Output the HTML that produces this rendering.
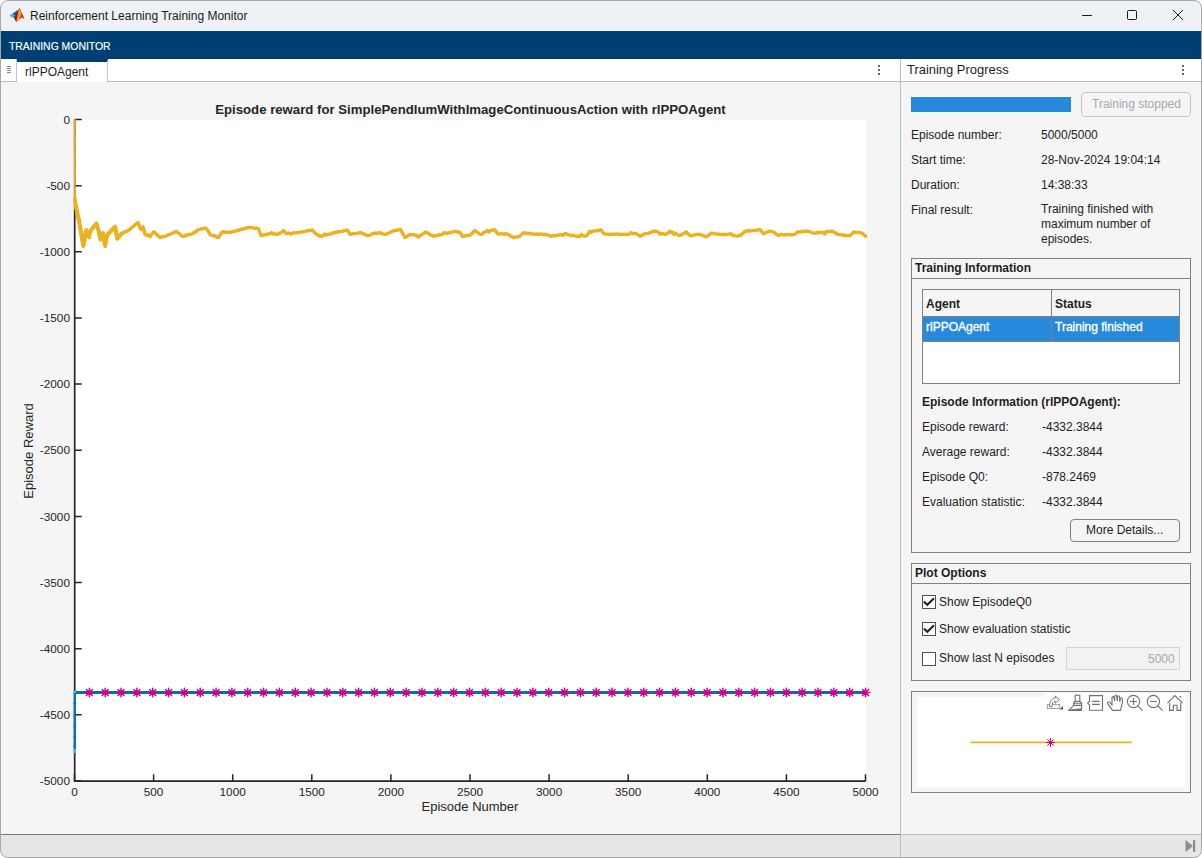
<!DOCTYPE html>
<html><head><meta charset="utf-8">
<style>
*{margin:0;padding:0;box-sizing:border-box;}
html,body{width:1202px;height:858px;overflow:hidden;background:#ffffff;font-family:"Liberation Sans",sans-serif;}
.abs{position:absolute;}
#win{position:absolute;left:0;top:0;width:1202px;height:858px;overflow:hidden;border-radius:8px;background:#f5f5f5;}
#frame{position:absolute;left:0;top:0;width:1202px;height:858px;border:1px solid #a8a8a8;border-radius:8px;box-shadow:0 0 0 6px #ffffff;pointer-events:none;}
.t{position:absolute;white-space:nowrap;font-size:12px;color:#1e1e1e;line-height:15px;transform:translateY(1px);}
.b{font-weight:bold;}
</style></head><body>
<div id="win">
  <!-- title bar -->
  <div class="abs" style="left:0;top:0;width:1200px;height:30px;background:#eef2f7;"></div>
  <svg class="abs" style="left:0;top:0" width="30" height="30" viewBox="0 0 30 30">
    <path d="M9.3 15.7 L14.5 12.6 L18.7 9.3 L16.5 14.5 L14.2 18.3 Z" fill="#4ba6ea"/>
    <path d="M12.5 13.8 L18.7 9.3 L16.8 13.8 L14.5 15.2 Z" fill="#1f5aa0"/>
    <path d="M14 17.6 L19.8 7.8 L24.6 19.2 L21.8 17.6 L16.4 22 Z" fill="#c43518"/>
    <path d="M14 17.6 L17.8 11.2 L17.4 17.2 L16.4 22 Z" fill="#8a1c10"/>
    <path d="M19.8 7.8 L21.6 13.2 L19.8 18.8 L16.4 22 L17.3 16.5 L18.6 10.8 Z" fill="#f29a30"/>
    <path d="M16.4 22 L17.6 19 L19.6 18.6 Z" fill="#f5c33a"/>
  </svg>
  <div class="t" style="left:30px;top:8px;font-size:12px;color:#1a1a1a;">Reinforcement Learning Training Monitor</div>
  <!-- window controls -->
  <div class="abs" style="left:1082px;top:15px;width:10px;height:1px;background:#1a1a1a;"></div>
  <div class="abs" style="left:1127px;top:10px;width:10px;height:10px;border:1px solid #1a1a1a;border-radius:1.5px;"></div>
  <svg class="abs" style="left:1172px;top:9px" width="12" height="12" viewBox="0 0 12 12"><path d="M1 1 L11 11 M11 1 L1 11" stroke="#1a1a1a" stroke-width="1"/></svg>
  <!-- toolstrip band -->
  <div class="abs" style="left:0;top:31px;width:1202px;height:28px;background:#003f73;"></div>
  <div class="t" style="left:9px;top:38px;font-size:11.5px;color:#ffffff;-webkit-text-stroke:0.15px #fff;transform:translateY(1px) scaleX(0.905);transform-origin:0 0;">TRAINING MONITOR</div>
  <!-- tab row -->
  <div class="abs" style="left:0;top:59px;width:900px;height:23px;background:#ffffff;border-bottom:1px solid #bdbdbd;"></div>
  <div class="abs" style="left:16px;top:59px;width:92px;height:23px;background:#ffffff;border-top:3px solid #003f73;border-left:1px solid #c8c8c8;border-right:1px solid #c8c8c8;"></div>
  <div class="t" style="left:25px;top:64px;">rlPPOAgent</div>
  <div class="abs" style="left:7px;top:66px;width:4px;height:1px;background:#8a8a8a;box-shadow:0 2px 0 #8a8a8a,0 4px 0 #8a8a8a,0 6px 0 #8a8a8a;"></div>
  <div class="abs" style="left:16px;top:59px;width:1px;height:23px;background:#c4c4c4;"></div>
  <div class="abs" style="left:878px;top:65px;width:2px;height:2px;background:#666;box-shadow:0 4px 0 #666,0 8px 0 #666;"></div>
  <!-- right header -->
  <div class="abs" style="left:901px;top:59px;width:300px;height:23px;background:#ffffff;border-bottom:1px solid #bdbdbd;"></div>
  <div class="t" style="left:907px;top:61px;font-size:12.95px;">Training Progress</div>
  <div class="abs" style="left:1182px;top:65px;width:2px;height:2px;background:#666;box-shadow:0 4px 0 #666,0 8px 0 #666;"></div>
  <!-- divider -->
  <div class="abs" style="left:900px;top:59px;width:1px;height:776px;background:#bdbdbd;"></div>
  <!-- chart -->
  <svg class="abs" style="left:0;top:0" width="1202" height="858" viewBox="0 0 1202 858">
  <rect x="75" y="120" width="791" height="661" fill="#ffffff"/>
<path d="M74.7 119.5 L74.7 781.2 L865.5 781.2" fill="none" stroke="#262626" stroke-width="1.7" stroke-linejoin="round"/>
<path d="M74.7 119.50 L81.7 119.50 M74.7 185.65 L81.7 185.65 M74.7 251.80 L81.7 251.80 M74.7 317.95 L81.7 317.95 M74.7 384.10 L81.7 384.10 M74.7 450.25 L81.7 450.25 M74.7 516.40 L81.7 516.40 M74.7 582.55 L81.7 582.55 M74.7 648.70 L81.7 648.70 M74.7 714.85 L81.7 714.85 M74.7 781.00 L81.7 781.00 M74.50 781.2 L74.50 774.2 M153.60 781.2 L153.60 774.2 M232.70 781.2 L232.70 774.2 M311.80 781.2 L311.80 774.2 M390.90 781.2 L390.90 774.2 M470.00 781.2 L470.00 774.2 M549.10 781.2 L549.10 774.2 M628.20 781.2 L628.20 774.2 M707.30 781.2 L707.30 774.2 M786.40 781.2 L786.40 774.2 M865.50 781.2 L865.50 774.2" stroke="#262626" stroke-width="1.5" fill="none"/>
<path d="M74.9 197.6 L76.8 212.7 L79.1 221.8 L80.6 230.9 L83.3 246.4 L85.2 237.0 L86.3 229.8 L87.8 233.8 L89.3 237.7 L90.1 230.9 L91.7 229.0 L93.3 227.1 L94.9 225.2 L96.5 223.3 L98.4 229.4 L100.3 240.0 L101.8 237.0 L103.3 234.0 L105.2 246.4 L107.1 234.7 L108.7 233.0 L110.3 231.4 L111.9 229.7 L113.5 228.1 L115.1 226.4 L117.0 238.9 L118.8 237.0 L120.5 235.1 L122.3 233.2 L123.8 232.4 L125.3 231.6 L126.8 231.3 L128.3 230.2 L129.8 229.4 L131.5 227.8 L133.1 226.7 L134.8 224.9 L136.4 223.6 L138.1 222.5 L140.0 228.0 L141.6 229.6 L143.1 226.9 L145.0 234.4 L146.7 235.3 L148.3 234.7 L150.0 236.8 L151.8 234.1 L153.7 231.9 L155.3 232.9 L156.8 234.7 L158.4 236.1 L160.0 237.5 L161.7 237.0 L163.3 236.4 L165.0 236.3 L166.7 235.7 L168.3 234.8 L170.0 234.4 L171.6 233.4 L173.1 233.0 L174.6 232.3 L176.2 231.2 L177.8 232.8 L179.3 233.3 L180.9 235.3 L182.5 236.2 L184.2 236.2 L185.8 235.0 L187.4 235.2 L189.1 234.2 L190.8 234.5 L192.4 233.7 L194.1 232.2 L195.7 232.1 L197.4 230.0 L199.1 229.7 L200.9 229.0 L202.6 228.6 L204.4 228.2 L206.1 228.1 L208.1 231.0 L210.0 234.4 L211.7 235.4 L213.4 235.5 L215.2 236.0 L216.9 237.2 L218.6 237.5 L220.4 234.4 L222.3 231.9 L223.8 231.8 L225.3 232.4 L226.8 232.1 L228.3 232.1 L229.8 232.5 L231.4 231.9 L232.9 231.6 L234.5 231.6 L236.0 230.9 L237.6 230.2 L239.2 230.3 L240.7 229.4 L242.3 229.4 L243.8 228.5 L245.4 228.6 L246.9 227.9 L248.5 227.5 L250.2 227.3 L251.8 227.7 L253.5 227.9 L255.2 228.4 L256.8 228.2 L258.5 228.7 L261.0 235.6 L262.5 234.9 L264.0 235.0 L265.5 234.7 L267.0 234.7 L268.5 233.6 L270.0 233.7 L271.5 232.5 L273.0 234.0 L274.5 233.8 L276.0 234.2 L277.5 234.4 L279.1 233.6 L280.6 232.9 L282.1 231.9 L283.7 230.6 L286.2 233.7 L287.7 233.4 L289.2 233.0 L290.7 234.1 L292.2 233.4 L293.7 232.8 L295.2 232.9 L296.7 232.6 L298.2 232.6 L299.7 232.2 L301.2 231.9 L302.8 231.9 L304.4 231.6 L306.0 231.1 L307.7 230.7 L309.3 230.6 L310.9 230.4 L312.5 230.0 L315.0 233.1 L316.7 234.4 L318.3 235.1 L320.0 236.2 L321.6 236.0 L323.1 235.9 L324.6 234.0 L326.2 235.0 L328.0 234.3 L329.7 234.0 L331.5 233.8 L333.2 232.6 L335.0 232.5 L336.6 232.3 L338.1 231.6 L339.7 231.7 L341.2 231.6 L342.8 231.1 L344.4 230.6 L345.9 230.6 L347.5 230.0 L350.0 234.4 L351.7 234.0 L353.3 233.6 L355.0 233.4 L356.7 233.4 L358.3 233.2 L360.0 232.5 L361.5 232.9 L363.0 233.6 L364.5 234.3 L366.0 235.0 L367.5 235.6 L369.2 235.4 L371.0 234.6 L372.7 233.7 L374.5 233.2 L376.2 233.1 L377.9 233.4 L379.5 232.4 L381.2 233.5 L382.9 233.8 L384.5 234.4 L386.2 234.4 L387.8 233.3 L389.4 232.8 L390.9 231.9 L392.5 231.2 L394.1 230.6 L395.7 230.3 L397.4 230.3 L399.0 229.4 L400.6 229.4 L402.1 232.4 L403.7 235.0 L405.0 237.5 L406.7 236.8 L408.3 235.8 L410.0 234.4 L411.7 234.9 L413.3 234.6 L415.0 235.3 L416.7 235.2 L418.3 237.2 L420.0 235.6 L421.9 234.5 L423.7 233.3 L425.6 231.9 L427.2 232.9 L428.8 233.4 L430.5 234.9 L432.1 235.4 L433.7 236.2 L435.5 235.7 L437.2 235.8 L439.0 234.8 L440.7 234.8 L442.5 234.4 L444.1 232.6 L445.6 233.2 L447.2 233.3 L448.8 232.8 L450.3 232.7 L451.9 232.1 L453.4 231.9 L455.0 231.2 L456.7 231.8 L458.3 232.0 L460.0 232.5 L462.5 236.2 L464.0 236.2 L465.5 235.5 L467.0 235.8 L468.5 235.4 L470.0 235.0 L471.7 233.8 L473.3 231.9 L475.0 230.6 L476.7 231.9 L478.3 233.1 L480.0 234.4 L481.5 234.4 L483.0 233.3 L484.5 232.0 L486.0 231.4 L487.5 230.6 L489.0 232.0 L490.5 230.7 L492.0 230.1 L493.5 229.8 L495.0 230.0 L497.5 233.7 L499.2 234.1 L500.8 233.9 L502.5 233.8 L504.2 234.5 L505.8 233.4 L507.5 234.4 L509.1 234.8 L510.6 236.1 L512.2 236.7 L513.7 237.5 L515.3 237.2 L516.9 236.9 L518.4 236.7 L520.0 236.2 L521.9 234.1 L523.7 232.7 L525.5 233.2 L527.2 233.3 L529.0 233.5 L530.7 233.5 L532.5 234.0 L534.1 234.1 L535.6 234.4 L537.2 234.0 L538.8 234.3 L540.3 234.0 L541.9 234.1 L543.4 234.7 L545.0 234.4 L546.5 234.5 L548.1 235.2 L549.7 235.8 L551.2 236.2 L552.7 235.7 L554.2 235.9 L555.7 235.5 L557.2 235.5 L558.7 235.1 L560.2 234.6 L561.7 234.7 L563.2 235.3 L564.7 233.7 L566.2 233.7 L568.1 234.6 L570.0 235.0 L571.5 235.6 L573.1 235.2 L574.7 235.9 L576.2 236.2 L578.0 236.1 L579.7 236.2 L581.5 234.4 L583.2 235.9 L585.0 236.2 L586.5 235.4 L588.0 234.0 L589.5 231.4 L591.0 232.4 L592.5 231.2 L594.2 231.1 L596.0 230.8 L597.7 230.9 L599.5 230.0 L601.2 230.0 L603.7 233.7 L605.3 234.0 L607.0 234.1 L608.6 234.2 L610.2 234.1 L611.9 234.3 L613.5 234.3 L615.1 234.1 L616.7 233.9 L618.4 234.4 L620.0 234.4 L621.6 234.1 L623.2 234.4 L624.9 234.3 L626.5 234.1 L628.1 234.4 L629.7 234.1 L631.3 232.6 L633.0 233.6 L634.6 233.4 L636.2 233.7 L638.1 234.9 L640.0 236.2 L641.7 235.2 L643.3 234.6 L645.0 233.7 L646.7 233.7 L648.3 233.3 L650.0 232.7 L651.7 232.1 L653.3 231.3 L655.0 231.2 L656.7 231.5 L658.3 232.0 L660.0 234.3 L661.7 233.4 L663.3 233.8 L665.0 234.4 L666.5 234.0 L668.0 233.2 L669.5 231.2 L671.0 232.5 L672.5 231.9 L674.0 234.5 L675.5 233.0 L677.0 234.5 L678.5 235.2 L680.0 235.6 L681.5 234.7 L683.1 233.5 L684.7 233.2 L686.2 231.9 L688.1 233.7 L690.0 235.6 L691.7 235.7 L693.3 234.9 L695.0 235.0 L696.7 234.4 L698.3 234.3 L700.0 234.4 L701.5 235.2 L703.1 235.5 L704.7 236.2 L706.2 236.9 L707.9 235.7 L709.5 234.7 L711.2 233.1 L713.0 233.2 L714.7 233.9 L716.5 234.0 L718.2 234.0 L720.0 234.4 L721.5 234.5 L723.0 234.5 L724.5 234.2 L726.0 234.8 L727.5 234.4 L729.2 234.1 L731.0 233.8 L732.7 235.5 L734.5 235.5 L736.2 236.2 L737.9 235.8 L739.5 235.3 L741.2 235.0 L743.1 232.9 L745.0 231.2 L746.5 231.3 L748.0 230.6 L749.5 231.1 L751.0 230.9 L752.5 230.6 L754.0 230.4 L755.5 230.5 L757.0 230.2 L758.5 229.7 L760.0 229.7 L761.9 231.9 L763.7 233.7 L765.3 233.0 L766.9 232.1 L768.4 231.5 L770.0 231.2 L771.9 231.6 L773.7 231.9 L775.6 233.6 L777.5 235.0 L779.1 235.2 L780.7 234.7 L782.3 234.5 L783.9 235.0 L785.5 234.6 L787.0 234.6 L788.6 234.5 L790.2 234.7 L791.8 234.8 L793.4 234.8 L795.0 234.4 L797.5 231.9 L799.2 232.0 L800.8 231.5 L802.5 231.9 L804.2 231.2 L805.8 231.2 L807.5 231.2 L809.0 231.6 L810.6 231.9 L812.2 232.9 L813.7 233.1 L815.3 233.2 L816.8 232.5 L818.4 232.9 L820.0 232.1 L821.5 232.3 L823.1 232.5 L824.7 234.0 L826.2 231.5 L827.8 231.9 L829.4 231.2 L830.9 231.1 L832.5 231.2 L834.2 232.4 L835.8 233.1 L837.5 234.4 L839.1 234.6 L840.6 234.6 L842.2 235.2 L843.8 235.0 L845.3 235.3 L846.9 235.6 L848.4 235.7 L850.0 235.6 L851.9 234.0 L853.7 231.9 L855.2 232.3 L856.7 232.6 L858.2 232.4 L859.7 232.8 L861.2 232.7 L863.4 234.4 L865.6 236.2" fill="none" stroke="#EDB120" stroke-width="3.4" stroke-linejoin="round" stroke-linecap="round"/>
<path d="M74.6 120 L74.9 200" fill="none" stroke="#EDB120" stroke-width="1.6"/>
<circle cx="74.6" cy="120" r="1.3" fill="#EDB120"/>
<circle cx="74.7" cy="140.5" r="1.3" fill="#EDB120"/>
<circle cx="74.8" cy="157" r="1.3" fill="#EDB120"/>
<circle cx="74.8" cy="174" r="1.3" fill="#EDB120"/>
<circle cx="74.9" cy="189" r="1.3" fill="#EDB120"/>
<circle cx="75" cy="197" r="1.3" fill="#EDB120"/>
<path d="M76 206 L77.5 214 L79 220 L80.5 229 L82 238 L83.3 245.5 L84.5 240 L85.5 233 L86.5 231 L88 236 L89.5 233 L92 229 L96.5 223.5 L98.5 230 L100 238 L101.5 236 L103 233 L104 241 L105.2 245.5 L106 239 L108 234 L111 231 L115 226.8 L116.5 234 L117.5 238.5 L120 235 L122.5 233" fill="none" stroke="#EDB120" stroke-width="4" stroke-linejoin="round" stroke-linecap="round"/>
<path d="M74.8 753.5 L74.8 692.5" fill="none" stroke="#0072BD" stroke-width="2.3"/>
<path d="M73.8 692.5 L865.5 692.5" fill="none" stroke="#0072BD" stroke-width="3"/>
<circle cx="74.8" cy="692" r="1.2" fill="#4DBEEE"/>
<circle cx="74.8" cy="750" r="1.2" fill="#4DBEEE"/>
<circle cx="74.8" cy="752" r="1.2" fill="#4DBEEE"/>
<circle cx="74.8" cy="703.5" r="1.4" fill="#0072BD"/>
<circle cx="74.8" cy="715.5" r="1.4" fill="#0072BD"/>
<circle cx="74.8" cy="726.5" r="1.4" fill="#0072BD"/>
<circle cx="74.8" cy="737" r="1.4" fill="#0072BD"/>
<circle cx="74.8" cy="746" r="1.4" fill="#0072BD"/>
<path d="M85.04 692.5 L93.64 692.5 M89.34 688.2 L89.34 696.8 M86.34 689.50 L92.34 695.50 M86.34 695.50 L92.34 689.50 M100.88 692.5 L109.48 692.5 M105.18 688.2 L105.18 696.8 M102.18 689.50 L108.18 695.50 M102.18 695.50 L108.18 689.50 M116.72 692.5 L125.32 692.5 M121.02 688.2 L121.02 696.8 M118.02 689.50 L124.02 695.50 M118.02 695.50 L124.02 689.50 M132.56 692.5 L141.16 692.5 M136.86 688.2 L136.86 696.8 M133.86 689.50 L139.86 695.50 M133.86 695.50 L139.86 689.50 M148.40 692.5 L157.00 692.5 M152.70 688.2 L152.70 696.8 M149.70 689.50 L155.70 695.50 M149.70 695.50 L155.70 689.50 M164.24 692.5 L172.84 692.5 M168.54 688.2 L168.54 696.8 M165.54 689.50 L171.54 695.50 M165.54 695.50 L171.54 689.50 M180.08 692.5 L188.68 692.5 M184.38 688.2 L184.38 696.8 M181.38 689.50 L187.38 695.50 M181.38 695.50 L187.38 689.50 M195.92 692.5 L204.52 692.5 M200.22 688.2 L200.22 696.8 M197.22 689.50 L203.22 695.50 M197.22 695.50 L203.22 689.50 M211.76 692.5 L220.36 692.5 M216.06 688.2 L216.06 696.8 M213.06 689.50 L219.06 695.50 M213.06 695.50 L219.06 689.50 M227.60 692.5 L236.20 692.5 M231.90 688.2 L231.90 696.8 M228.90 689.50 L234.90 695.50 M228.90 695.50 L234.90 689.50 M243.44 692.5 L252.04 692.5 M247.74 688.2 L247.74 696.8 M244.74 689.50 L250.74 695.50 M244.74 695.50 L250.74 689.50 M259.28 692.5 L267.88 692.5 M263.58 688.2 L263.58 696.8 M260.58 689.50 L266.58 695.50 M260.58 695.50 L266.58 689.50 M275.12 692.5 L283.72 692.5 M279.42 688.2 L279.42 696.8 M276.42 689.50 L282.42 695.50 M276.42 695.50 L282.42 689.50 M290.96 692.5 L299.56 692.5 M295.26 688.2 L295.26 696.8 M292.26 689.50 L298.26 695.50 M292.26 695.50 L298.26 689.50 M306.80 692.5 L315.40 692.5 M311.10 688.2 L311.10 696.8 M308.10 689.50 L314.10 695.50 M308.10 695.50 L314.10 689.50 M322.64 692.5 L331.24 692.5 M326.94 688.2 L326.94 696.8 M323.94 689.50 L329.94 695.50 M323.94 695.50 L329.94 689.50 M338.48 692.5 L347.08 692.5 M342.78 688.2 L342.78 696.8 M339.78 689.50 L345.78 695.50 M339.78 695.50 L345.78 689.50 M354.32 692.5 L362.92 692.5 M358.62 688.2 L358.62 696.8 M355.62 689.50 L361.62 695.50 M355.62 695.50 L361.62 689.50 M370.16 692.5 L378.76 692.5 M374.46 688.2 L374.46 696.8 M371.46 689.50 L377.46 695.50 M371.46 695.50 L377.46 689.50 M386.00 692.5 L394.60 692.5 M390.30 688.2 L390.30 696.8 M387.30 689.50 L393.30 695.50 M387.30 695.50 L393.30 689.50 M401.84 692.5 L410.44 692.5 M406.14 688.2 L406.14 696.8 M403.14 689.50 L409.14 695.50 M403.14 695.50 L409.14 689.50 M417.68 692.5 L426.28 692.5 M421.98 688.2 L421.98 696.8 M418.98 689.50 L424.98 695.50 M418.98 695.50 L424.98 689.50 M433.52 692.5 L442.12 692.5 M437.82 688.2 L437.82 696.8 M434.82 689.50 L440.82 695.50 M434.82 695.50 L440.82 689.50 M449.36 692.5 L457.96 692.5 M453.66 688.2 L453.66 696.8 M450.66 689.50 L456.66 695.50 M450.66 695.50 L456.66 689.50 M465.20 692.5 L473.80 692.5 M469.50 688.2 L469.50 696.8 M466.50 689.50 L472.50 695.50 M466.50 695.50 L472.50 689.50 M481.04 692.5 L489.64 692.5 M485.34 688.2 L485.34 696.8 M482.34 689.50 L488.34 695.50 M482.34 695.50 L488.34 689.50 M496.88 692.5 L505.48 692.5 M501.18 688.2 L501.18 696.8 M498.18 689.50 L504.18 695.50 M498.18 695.50 L504.18 689.50 M512.72 692.5 L521.32 692.5 M517.02 688.2 L517.02 696.8 M514.02 689.50 L520.02 695.50 M514.02 695.50 L520.02 689.50 M528.56 692.5 L537.16 692.5 M532.86 688.2 L532.86 696.8 M529.86 689.50 L535.86 695.50 M529.86 695.50 L535.86 689.50 M544.40 692.5 L553.00 692.5 M548.70 688.2 L548.70 696.8 M545.70 689.50 L551.70 695.50 M545.70 695.50 L551.70 689.50 M560.24 692.5 L568.84 692.5 M564.54 688.2 L564.54 696.8 M561.54 689.50 L567.54 695.50 M561.54 695.50 L567.54 689.50 M576.08 692.5 L584.68 692.5 M580.38 688.2 L580.38 696.8 M577.38 689.50 L583.38 695.50 M577.38 695.50 L583.38 689.50 M591.92 692.5 L600.52 692.5 M596.22 688.2 L596.22 696.8 M593.22 689.50 L599.22 695.50 M593.22 695.50 L599.22 689.50 M607.76 692.5 L616.36 692.5 M612.06 688.2 L612.06 696.8 M609.06 689.50 L615.06 695.50 M609.06 695.50 L615.06 689.50 M623.60 692.5 L632.20 692.5 M627.90 688.2 L627.90 696.8 M624.90 689.50 L630.90 695.50 M624.90 695.50 L630.90 689.50 M639.44 692.5 L648.04 692.5 M643.74 688.2 L643.74 696.8 M640.74 689.50 L646.74 695.50 M640.74 695.50 L646.74 689.50 M655.28 692.5 L663.88 692.5 M659.58 688.2 L659.58 696.8 M656.58 689.50 L662.58 695.50 M656.58 695.50 L662.58 689.50 M671.12 692.5 L679.72 692.5 M675.42 688.2 L675.42 696.8 M672.42 689.50 L678.42 695.50 M672.42 695.50 L678.42 689.50 M686.96 692.5 L695.56 692.5 M691.26 688.2 L691.26 696.8 M688.26 689.50 L694.26 695.50 M688.26 695.50 L694.26 689.50 M702.80 692.5 L711.40 692.5 M707.10 688.2 L707.10 696.8 M704.10 689.50 L710.10 695.50 M704.10 695.50 L710.10 689.50 M718.64 692.5 L727.24 692.5 M722.94 688.2 L722.94 696.8 M719.94 689.50 L725.94 695.50 M719.94 695.50 L725.94 689.50 M734.48 692.5 L743.08 692.5 M738.78 688.2 L738.78 696.8 M735.78 689.50 L741.78 695.50 M735.78 695.50 L741.78 689.50 M750.32 692.5 L758.92 692.5 M754.62 688.2 L754.62 696.8 M751.62 689.50 L757.62 695.50 M751.62 695.50 L757.62 689.50 M766.16 692.5 L774.76 692.5 M770.46 688.2 L770.46 696.8 M767.46 689.50 L773.46 695.50 M767.46 695.50 L773.46 689.50 M782.00 692.5 L790.60 692.5 M786.30 688.2 L786.30 696.8 M783.30 689.50 L789.30 695.50 M783.30 695.50 L789.30 689.50 M797.84 692.5 L806.44 692.5 M802.14 688.2 L802.14 696.8 M799.14 689.50 L805.14 695.50 M799.14 695.50 L805.14 689.50 M813.68 692.5 L822.28 692.5 M817.98 688.2 L817.98 696.8 M814.98 689.50 L820.98 695.50 M814.98 695.50 L820.98 689.50 M829.52 692.5 L838.12 692.5 M833.82 688.2 L833.82 696.8 M830.82 689.50 L836.82 695.50 M830.82 695.50 L836.82 689.50 M845.36 692.5 L853.96 692.5 M849.66 688.2 L849.66 696.8 M846.66 689.50 L852.66 695.50 M846.66 695.50 L852.66 689.50 M861.20 692.5 L869.80 692.5 M865.50 688.2 L865.50 696.8 M862.50 689.50 L868.50 695.50 M862.50 695.50 L868.50 689.50" stroke="#D4008C" stroke-width="1.5" fill="none" stroke-linecap="round"/>
<g font-family="Liberation Sans" font-size="11.8" fill="#262626"><text x="70" y="123.7" text-anchor="end">0</text><text x="70" y="189.8" text-anchor="end">-500</text><text x="70" y="256.0" text-anchor="end">-1000</text><text x="70" y="322.1" text-anchor="end">-1500</text><text x="70" y="388.3" text-anchor="end">-2000</text><text x="70" y="454.4" text-anchor="end">-2500</text><text x="70" y="520.6" text-anchor="end">-3000</text><text x="70" y="586.8" text-anchor="end">-3500</text><text x="70" y="652.9" text-anchor="end">-4000</text><text x="70" y="719.1" text-anchor="end">-4500</text><text x="70" y="785.2" text-anchor="end">-5000</text><text x="74.5" y="795.8" text-anchor="middle">0</text><text x="153.6" y="795.8" text-anchor="middle">500</text><text x="232.7" y="795.8" text-anchor="middle">1000</text><text x="311.8" y="795.8" text-anchor="middle">1500</text><text x="390.9" y="795.8" text-anchor="middle">2000</text><text x="470.0" y="795.8" text-anchor="middle">2500</text><text x="549.1" y="795.8" text-anchor="middle">3000</text><text x="628.2" y="795.8" text-anchor="middle">3500</text><text x="707.3" y="795.8" text-anchor="middle">4000</text><text x="786.4" y="795.8" text-anchor="middle">4500</text><text x="865.5" y="795.8" text-anchor="middle">5000</text></g>
<text x="470" y="810.7" text-anchor="middle" font-family="Liberation Sans" font-size="13" fill="#262626">Episode Number</text>
<text transform="translate(33.2 451) rotate(-90)" text-anchor="middle" font-family="Liberation Sans" font-size="13" fill="#262626">Episode Reward</text>
<text x="215.2" y="113.9" textLength="510.5" lengthAdjust="spacingAndGlyphs" font-family="Liberation Sans" font-weight="bold" font-size="13.7" fill="#262626">Episode reward for SimplePendlumWithImageContinuousAction with rlPPOAgent</text>
  </svg>
  <!-- right panel content -->
  <div class="abs" style="left:911px;top:97px;width:160px;height:15px;background:#2689dc;"></div>
  <div class="abs" style="left:1081px;top:92px;width:110px;height:25px;border:1px solid #c8c8c8;border-radius:4px;"></div>
  <div class="t" style="left:1092px;top:96px;color:#a8a8a8;">Training stopped</div>

  <div class="t" style="left:911px;top:127px;">Episode number:</div>
  <div class="t" style="left:1041px;top:127px;">5000/5000</div>
  <div class="t" style="left:911px;top:152px;">Start time:</div>
  <div class="t" style="left:1041px;top:152px;">28-Nov-2024 19:04:14</div>
  <div class="t" style="left:911px;top:177px;">Duration:</div>
  <div class="t" style="left:1041px;top:177px;">14:38:33</div>
  <div class="t" style="left:911px;top:202px;">Final result:</div>
  <div class="t" style="left:1041px;top:201px;">Training finished with<br>maximum number of<br>episodes.</div>

  <!-- Training Information panel -->
  <div class="abs" style="left:911px;top:258px;width:280px;height:295px;border:1px solid #808080;"></div>
  <div class="abs" style="left:912px;top:278px;width:278px;height:1px;background:#808080;"></div>
  <div class="t b" style="left:915px;top:260px;">Training Information</div>
  <!-- table -->
  <div class="abs" style="left:922px;top:289px;width:258px;height:95px;border:1px solid #808080;background:#ffffff;"></div>
  <div class="abs" style="left:923px;top:290px;width:256px;height:27px;background:#f5f5f5;border-bottom:1px solid #808080;"></div>
  <div class="abs" style="left:923px;top:317px;width:256px;height:25px;background:#2689dc;border-bottom:1px solid #808080;"></div>
  <div class="abs" style="left:1051px;top:290px;width:1px;height:51px;background:#808080;"></div>
  <div class="t b" style="left:926px;top:296px;">Agent</div>
  <div class="t b" style="left:1055px;top:296px;">Status</div>
  <div class="t" style="left:926px;top:319px;color:#fff;-webkit-text-stroke:0.35px #fff;">rlPPOAgent</div>
  <div class="t" style="left:1055px;top:319px;color:#fff;-webkit-text-stroke:0.35px #fff;">Training finished</div>

  <div class="t b" style="left:922px;top:394px;">Episode Information (rlPPOAgent):</div>
  <div class="t" style="left:922px;top:419px;">Episode reward:</div>
  <div class="t" style="left:1042px;top:419px;">-4332.3844</div>
  <div class="t" style="left:922px;top:444px;">Average reward:</div>
  <div class="t" style="left:1042px;top:444px;">-4332.3844</div>
  <div class="t" style="left:922px;top:469px;">Episode Q0:</div>
  <div class="t" style="left:1042px;top:469px;">-878.2469</div>
  <div class="t" style="left:922px;top:494px;">Evaluation statistic:</div>
  <div class="t" style="left:1042px;top:494px;">-4332.3844</div>
  <div class="abs" style="left:1070px;top:519px;width:110px;height:23px;border:1px solid #808080;border-radius:4px;"></div>
  <div class="t" style="left:1086px;top:522px;">More Details...</div>

  <!-- Plot Options -->
  <div class="abs" style="left:911px;top:563px;width:280px;height:118px;border:1px solid #808080;"></div>
  <div class="abs" style="left:912px;top:583px;width:278px;height:1px;background:#808080;"></div>
  <div class="t b" style="left:915px;top:565px;">Plot Options</div>
  <div class="abs" style="left:922px;top:595px;width:14px;height:14px;border:1px solid #505050;background:#fff;"></div>
  <svg class="abs" style="left:922px;top:595px" width="14" height="14"><path d="M1.9 6.6 L5.3 9.8 L12 3.2" stroke="#1e1e1e" stroke-width="2" fill="none"/></svg>
  <div class="t" style="left:939px;top:594px;">Show EpisodeQ0</div>
  <div class="abs" style="left:922px;top:622px;width:14px;height:14px;border:1px solid #505050;background:#fff;"></div>
  <svg class="abs" style="left:922px;top:622px" width="14" height="14"><path d="M1.9 6.6 L5.3 9.8 L12 3.2" stroke="#1e1e1e" stroke-width="2" fill="none"/></svg>
  <div class="t" style="left:939px;top:621px;">Show evaluation statistic</div>
  <div class="abs" style="left:922px;top:652px;width:14px;height:14px;border:1px solid #505050;background:#fff;"></div>
  <div class="t" style="left:939px;top:650px;">Show last N episodes</div>
  <div class="abs" style="left:1066px;top:647px;width:114px;height:23px;border:1px solid #d4d4d4;background:#f2f2f2;"></div>
  <div class="t" style="left:1148px;top:651px;color:#a8a8a8;">5000</div>

  <!-- preview -->
  <div class="abs" style="left:911px;top:691px;width:280px;height:102px;border:1px solid #808080;"></div>
  <div class="abs" style="left:917px;top:697px;width:268px;height:90px;background:#ffffff;"></div>
  <svg class="abs" style="left:960px;top:735px" width="180" height="15"><path d="M10.4 7.4 L171.7 7.4" stroke="#EDB120" stroke-width="1.6"/></svg>
  <svg class="abs" style="left:1045px;top:737px" width="11" height="11" viewBox="0 0 11 11"><path d="M1 5.5 L10 5.5 M5.5 1 L5.5 10 M2.3 2.3 L8.7 8.7 M2.3 8.7 L8.7 2.3" stroke="#D4008C" stroke-width="1"/></svg>
  <div class="abs" style="left:1045px;top:693px;width:140px;height:4px;background:#ffffff;"></div>
  <svg class="abs" style="left:1040px;top:690px" width="150" height="25" viewBox="1040 690 150 25">
   <g fill="none" stroke="#707070" stroke-width="1.1">
    <rect x="1047.4" y="704.6" width="12.2" height="3.8" stroke="#a0a0a0"/>
    <path d="M1049.6 706.6 C1049.4 701.5 1051.5 698.6 1055.3 698 L1055.3 696 L1059.5 699.6 L1055.3 703.2 L1055.3 701.1 C1053.2 701.3 1052 703 1052 706.6 Z" fill="#ffffff" stroke="#7a7a7a" stroke-width="1" stroke-linejoin="round"/>
    <path d="M1059.4 709.6 L1063 706 L1063 709.6 Z" fill="#555" stroke="none"/>
    <rect x="1075.2" y="695.2" width="4.6" height="6.2"/>
    <path d="M1075.2 701.4 L1073.5 703 L1073.5 705.6 M1079.8 701.4 L1081.6 703 L1081.6 710.2 M1073.5 703.2 L1081.6 703.2 M1073.5 705.4 L1081.6 705.4 M1073.5 705.6 L1068.6 710.4 L1081.6 710.4"/>
    <path d="M1070.5 709.6 L1081.6 708.2 L1081.6 710.4 L1069 710.4 Z" fill="#707070" stroke="none"/>
    <path d="M1089.5 701.5 L1089.5 695.6 L1102.5 695.6 L1102.5 710.3 L1089.5 710.3 L1089.5 704.8 L1087.6 703.1 Z"/>
    <path d="M1092.2 701.4 L1099.7 701.4 M1092.2 704.4 L1099.7 704.4"/>
    <path d="M1112.5 710.4 L1120.5 710.4 L1122.5 702 L1122.3 699 C1122 697.5 1120.5 697.5 1120.2 699 L1119.8 702 L1119.5 697 C1119.3 695.5 1117.8 695.5 1117.5 697 L1117.2 701 L1116.8 696 C1116.6 694.6 1115 694.6 1114.8 696 L1114.6 701 L1114 697.5 C1113.7 696.2 1112.2 696.3 1112 697.7 L1112 705 L1110 702.5 C1109 701.5 1107 702 1107.6 703.4 Z"/>
    <circle cx="1133.5" cy="701.5" r="6.1"/>
    <path d="M1137.9 705.9 L1142.6 710.6 M1130.1 701.5 L1136.9 701.5 M1133.5 698.1 L1133.5 704.9"/>
    <circle cx="1153.4" cy="701.5" r="6.1"/>
    <path d="M1157.8 705.9 L1162.6 710.6 M1150.1 701.5 L1156.7 701.5"/>
    <path d="M1167.4 703.2 L1174.9 695.6 L1182.6 703.2 M1169.6 703 L1169.6 710.4 L1173.3 710.4 L1173.3 705.3 L1177 705.3 L1177 710.4 L1180.7 710.4 L1180.7 703"/>
    <path d="M1179 696 L1181.2 696 L1181.2 698.2 Z" fill="#707070" stroke="none"/>
   </g>
  </svg>

  <!-- status bar -->
  <div class="abs" style="left:0;top:834px;width:1202px;height:24px;background:#e6e6e6;border-top:1px solid #bdbdbd;"></div>
  <div class="abs" style="left:0;top:834px;width:900px;height:1px;background:#7a7a7a;"></div>
  <div class="abs" style="left:900px;top:834px;width:1px;height:24px;background:#bdbdbd;"></div>
  <svg class="abs" style="left:1185px;top:840px" width="11" height="13"><path d="M0.5 0 L8 6 L0.5 12 Z" fill="#8c8c8c"/><rect x="8" y="0" width="2.2" height="12" fill="#8c8c8c"/></svg>
</div>
<div id="frame"></div>
</body></html>
